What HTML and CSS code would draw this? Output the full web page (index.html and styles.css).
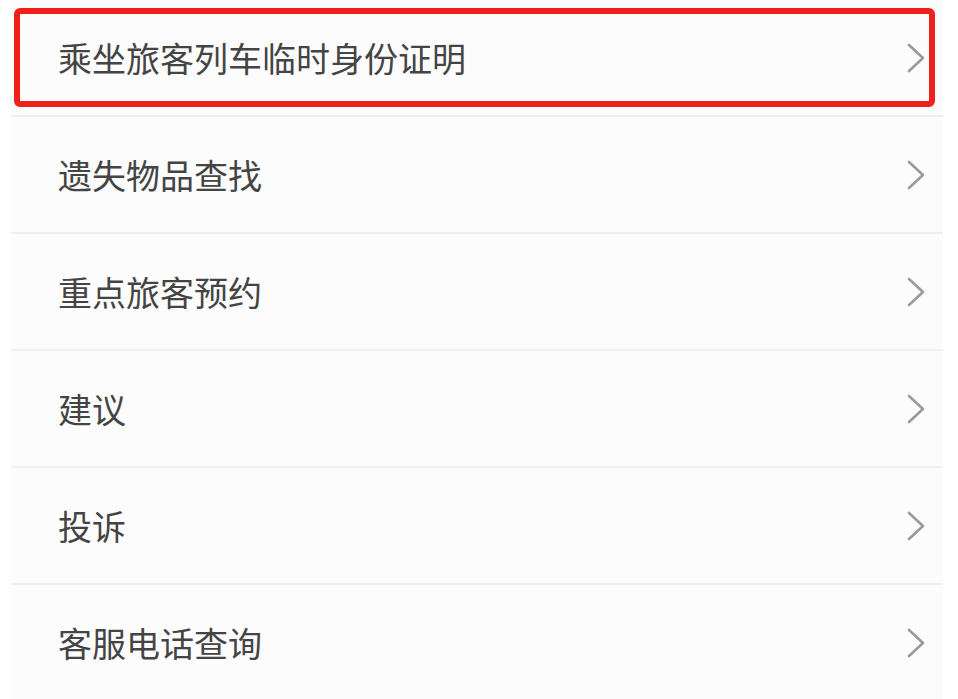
FILE: index.html
```html
<!DOCTYPE html>
<html lang="zh-CN">
<head>
  <meta charset="UTF-8">
  <title>服务</title>
  <link rel="stylesheet" href="styles.css">
</head>
<body>
  <div class="menu">
    <div class="item">
      <span class="label">乘坐旅客列车临时身份证明</span>
      <svg class="arrow" viewBox="0 0 20 32"><path d="M3 3 L17 16 L3 29"/></svg>
      <div class="highlight"></div>
    </div>
    <div class="item">
      <span class="label">遗失物品查找</span>
      <svg class="arrow" viewBox="0 0 20 32"><path d="M3 3 L17 16 L3 29"/></svg>
    </div>
    <div class="item">
      <span class="label">重点旅客预约</span>
      <svg class="arrow" viewBox="0 0 20 32"><path d="M3 3 L17 16 L3 29"/></svg>
    </div>
    <div class="item">
      <span class="label">建议</span>
      <svg class="arrow" viewBox="0 0 20 32"><path d="M3 3 L17 16 L3 29"/></svg>
    </div>
    <div class="item">
      <span class="label">投诉</span>
      <svg class="arrow" viewBox="0 0 20 32"><path d="M3 3 L17 16 L3 29"/></svg>
    </div>
    <div class="item">
      <span class="label">客服电话查询</span>
      <svg class="arrow" viewBox="0 0 20 32"><path d="M3 3 L17 16 L3 29"/></svg>
    </div>
  </div>
</body>
</html>
```

FILE: styles.css
```css
body {
  margin: 0;
  background: #ffffff;
  font-family: "Noto Sans CJK SC", "Noto Sans", sans-serif;
}

.menu {
  margin-left: 11px;
  width: 932px;
}

.item {
  position: relative;
  display: flex;
  align-items: center;
  justify-content: space-between;
  height: 115px;
  padding: 0 17px 0 47px;
  background: #fcfcfc;
  border-bottom: 2px solid #efefef;
}

.item:last-child {
  border-bottom: none;
}

.label {
  font-size: 34px;
  color: #444444;
}

.arrow {
  width: 20px;
  height: 32px;
}

.arrow path {
  fill: none;
  stroke: #9a9a9a;
  stroke-width: 2.6;
  stroke-linecap: round;
  stroke-linejoin: round;
}

.highlight {
  position: absolute;
  left: 3px;
  top: 8px;
  width: 909px;
  height: 87px;
  border: 6px solid #f0201a;
  border-radius: 6px;
}
```
